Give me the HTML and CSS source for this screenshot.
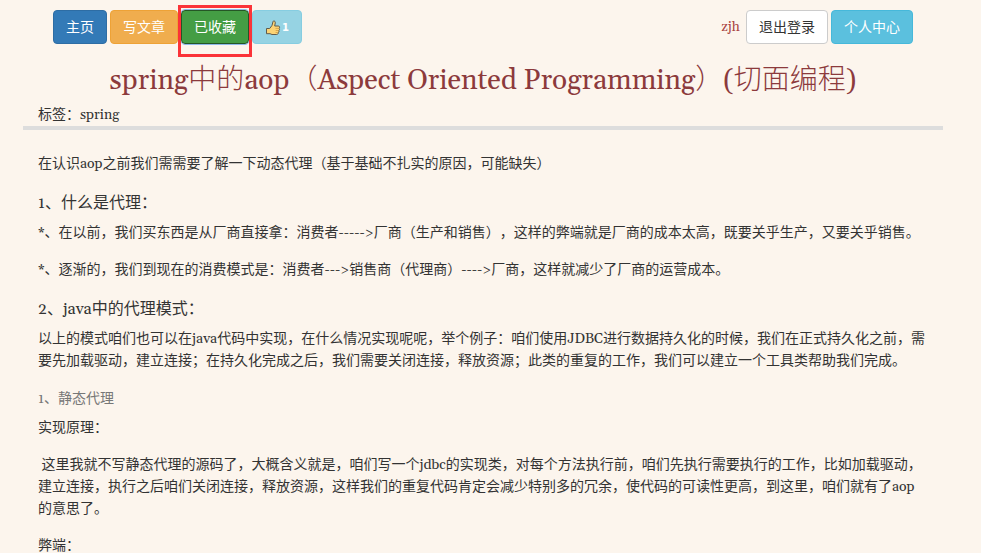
FILE: index.html
```
<!DOCTYPE html>
<html lang="zh-CN">
<head>
<meta charset="utf-8">
<title>spring中的aop</title>
<link rel="stylesheet" href="styles.css">
</head>
<body>
<div class="page">
  <nav class="toolbar">
    <div class="group">
      <button class="btn primary" type="button">主页</button>
      <button class="btn warning" type="button">写文章</button>
      <span class="marked"><button class="btn success" type="button">已收藏</button></span>
      <button class="btn like" type="button" aria-label="点赞 1">
        <svg viewBox="0 0 16 16" width="16" height="16" aria-hidden="true">
          <path d="M1.5 8.5h3.2L7 5.4 8 1.6q.3-.9 1.1-.7 1.3.3 1.2 1.9L9.7 6h3.6q1.3.1 1.3 1.2 0 .8-.7 1.1.8.5.6 1.3-.1.7-.8.9.5.6.2 1.3-.2.6-.8.7.3.5 0 1.1-.4.9-1.4.9H7l-2-.8H1.5z" fill="#fbd374" stroke="#5f5b4c" stroke-linejoin="round"/>
          <path d="M10.5 8.4h3.2M10.7 10.5h2.7M10.6 12.5h2" stroke="#d39b3f" stroke-width=".8"/>
        </svg><span class="count">1</span>
      </button>
    </div>
    <div class="group">
      <a class="user" href="#">zjh</a>
      <button class="btn plain" type="button">退出登录</button>
      <button class="btn info" type="button">个人中心</button>
    </div>
  </nav>
  <header class="heading">
    <h1>spring中的aop（Aspect Oriented Programming）(切面编程)</h1>
    <div class="tags">标签：spring</div>
  </header>
  <article class="content">
    <p>在认识aop之前我们需需要了解一下动态代理（基于基础不扎实的原因，可能缺失）</p>
    <h4>1、什么是代理：</h4>
    <p>*、在以前，我们买东西是从厂商直接拿：消费者-----&gt;厂商（生产和销售），这样的弊端就是厂商的成本太高，既要关乎生产，又要关乎销售。</p>
    <p>*、逐渐的，我们到现在的消费模式是：消费者---&gt;销售商（代理商）----&gt;厂商，这样就减少了厂商的运营成本。</p>
    <h4>2、java中的代理模式：</h4>
    <p>以上的模式咱们也可以在java代码中实现，在什么情况实现呢呢，举个例子：咱们使用JDBC进行数据持久化的时候，我们在正式持久化之前，需要先加载驱动，建立连接；在持久化完成之后，我们需要关闭连接，释放资源；此类的重复的工作，我们可以建立一个工具类帮助我们完成。</p>
    <h5>1、静态代理</h5>
    <p>实现原理：</p>
    <p>&nbsp;这里我就不写静态代理的源码了，大概含义就是，咱们写一个jdbc的实现类，对每个方法执行前，咱们先执行需要执行的工作，比如加载驱动，建立连接，执行之后咱们关闭连接，释放资源，这样我们的重复代码肯定会减少特别多的冗余，使代码的可读性更高，到这里，咱们就有了aop的意思了。</p>
    <p>弊端：</p>
  </article>
</div>
</body>
</html>
```
FILE: styles.css
```
* { box-sizing: border-box; }
body {
  margin: 0;
  height: 100vh;
  overflow: hidden;
  background: #fcf5ed;
  color: #333;
  font: 14px/22px Georgia, Gelasio, "Liberation Serif", "Noto Sans CJK SC", serif;
  text-spacing-trim: space-all;
}
.page { padding: 10px 38px 0 23px; }
.toolbar {
  display: flex;
  justify-content: space-between;
  padding: 0 30px;
}
.group { display: flex; align-items: center; gap: 3px; }
.btn {
  height: 34px;
  padding: 2px 12px 0;
  border: 1px solid;
  border-radius: 4px;
  color: #fff;
  font: inherit;
  white-space: nowrap;
}
.primary { background: #337ab7; border-color: #2e6da4; }
.warning { background: #f0ad4e; border-color: #eea236; }
.success { background: #449d44; border-color: #255625; outline: 1px solid #8fb8ea; }
.info { background: #5bc0de; border-color: #46b8da; }
.plain { background: #fff; border-color: #ccc; color: #333; }
.like {
  display: flex;
  align-items: center;
  gap: 1px;
  background: #96d3e3;
  border-color: #86cde1;
}
.count { font: bold 10px/12px "DejaVu Sans", sans-serif; }
.marked { position: relative; }
.marked .btn { display: block; }
.marked::after {
  content: "";
  position: absolute;
  inset: -5px -3px -13px;
  border: 3px solid #fb3338;
  pointer-events: none;
}
.user {
  margin-right: 3px;
  color: #a94442;
  text-decoration: none;
}
.heading { border-bottom: 4px solid #ddd; padding: 18px 15px 0; }
h1 {
  margin: 0 0 5px;
  color: #8c3a3c;
  font-size: 28px;
  font-weight: 300;
  line-height: 38px;
  text-align: center;
}
.tags { line-height: 21px; }
.content { padding: 23px 15px 0; }
p { margin: 0 0 15px; }
h4, h5 { font-weight: 400; line-height: 22px; }
h4 { margin: 17px 0 8px; font-size: 16px; }
h5 { margin: 16px 0 7px; font-size: 14px; color: #777; }
```
